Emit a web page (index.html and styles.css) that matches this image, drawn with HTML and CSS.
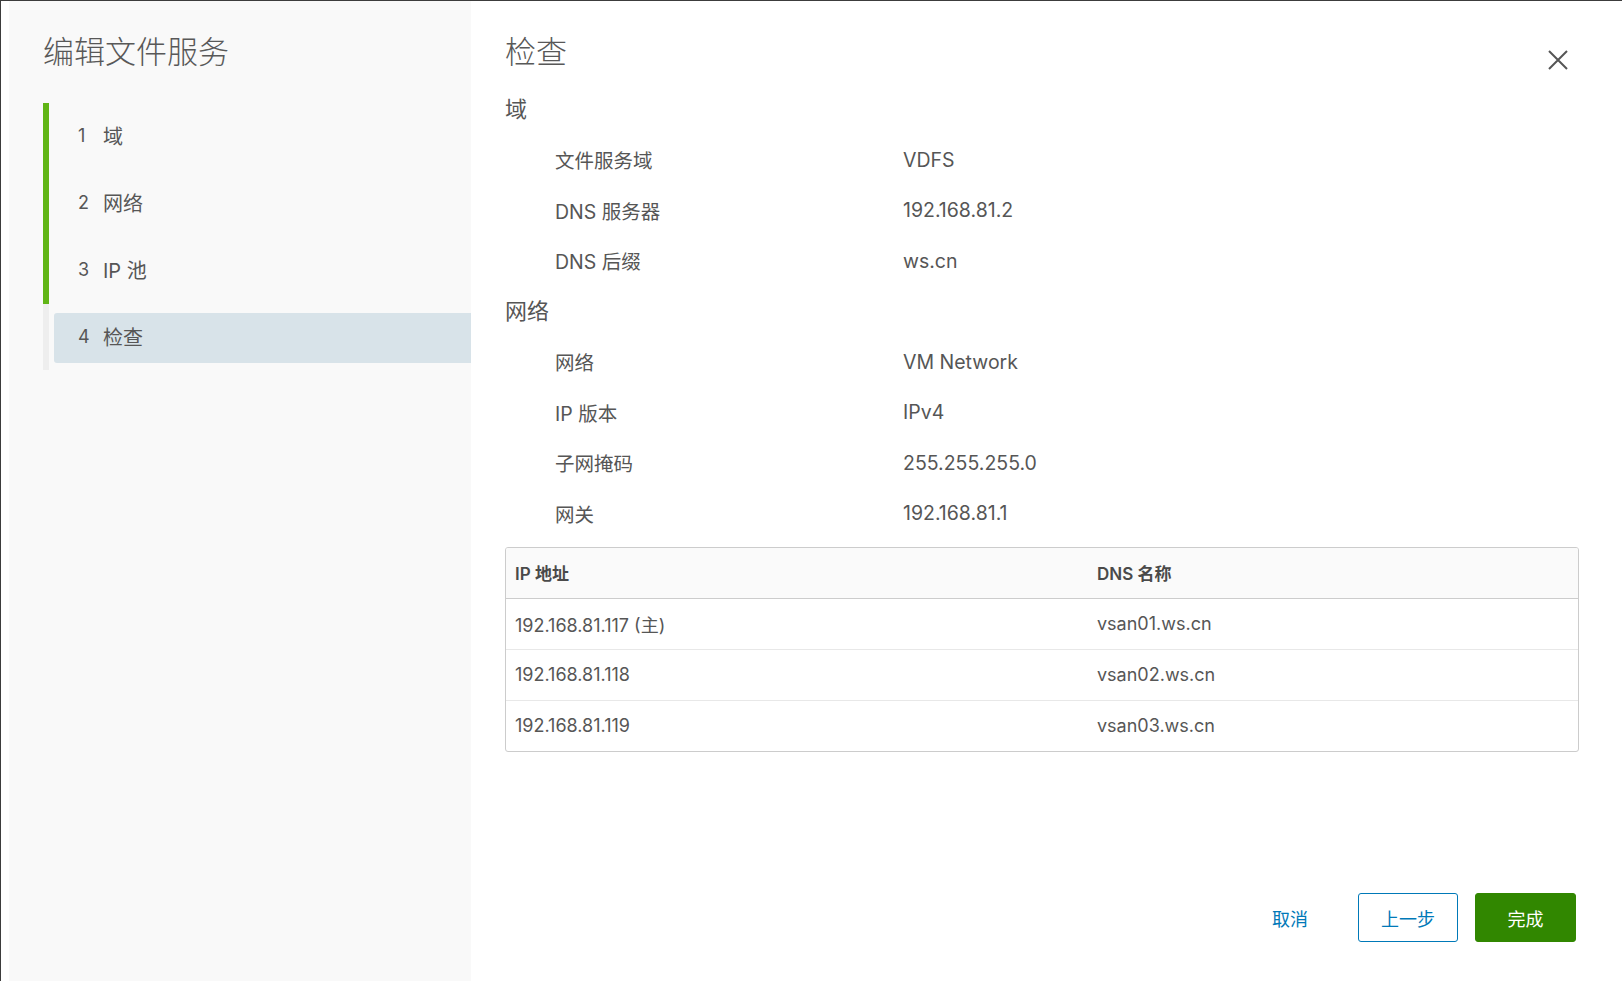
FILE: index.html
```html
<!DOCTYPE html>
<html lang="zh-CN">
<head>
<meta charset="utf-8">
<title>编辑文件服务</title>
<link rel="stylesheet" href="styles.css">
</head>
<body>
<div class="frame">
  <aside class="sidebar">
    <h1 class="wizard-title">编辑文件服务</h1>
    <ol class="stepnav">
      <li class="step done"><div class="step-box"><span class="step-num">1</span><span class="step-label">域</span></div></li>
      <li class="step done"><div class="step-box"><span class="step-num">2</span><span class="step-label">网络</span></div></li>
      <li class="step done"><div class="step-box"><span class="step-num">3</span><span class="step-label">IP 池</span></div></li>
      <li class="step current"><div class="step-box"><span class="step-num">4</span><span class="step-label">检查</span></div></li>
    </ol>
  </aside>
  <main class="content">
    <header class="content-header">
      <h2 class="page-title">检查</h2>
      <button class="close-btn" aria-label="关闭">
        <svg width="20" height="20" viewBox="0 0 20 20"><path d="M1 1 L19 19 M19 1 L1 19" stroke="#555" stroke-width="2" fill="none"/></svg>
      </button>
    </header>
    <section class="review">
      <div class="section-title">域</div>
      <div class="kv"><span class="k">文件服务域</span><span class="v">VDFS</span></div>
      <div class="kv"><span class="k">DNS 服务器</span><span class="v">192.168.81.2</span></div>
      <div class="kv"><span class="k">DNS 后缀</span><span class="v">ws.cn</span></div>
      <div class="section-title">网络</div>
      <div class="kv"><span class="k">网络</span><span class="v">VM Network</span></div>
      <div class="kv"><span class="k">IP 版本</span><span class="v">IPv4</span></div>
      <div class="kv"><span class="k">子网掩码</span><span class="v">255.255.255.0</span></div>
      <div class="kv"><span class="k">网关</span><span class="v">192.168.81.1</span></div>
      <div class="grid">
        <div class="grid-row grid-head"><div class="cell c1">IP 地址</div><div class="cell c2">DNS 名称</div></div>
        <div class="grid-row"><div class="cell c1">192.168.81.117 (主)</div><div class="cell c2">vsan01.ws.cn</div></div>
        <div class="grid-row"><div class="cell c1">192.168.81.118</div><div class="cell c2">vsan02.ws.cn</div></div>
        <div class="grid-row last"><div class="cell c1">192.168.81.119</div><div class="cell c2">vsan03.ws.cn</div></div>
      </div>
    </section>
    <footer class="actions">
      <button class="btn btn-link">取消</button>
      <button class="btn btn-outline">上一步</button>
      <button class="btn btn-success">完成</button>
    </footer>
  </main>
</div>
</body>
</html>
```
FILE: styles.css
```css
* { box-sizing: border-box; }
html, body { margin: 0; padding: 0; background: #fff; }
body {
  font-family: "Inter", "Noto Sans CJK SC", sans-serif;
  color: #565656;
  width: 1622px;
  height: 981px;
  overflow: hidden;
}
.frame {
  display: flex;
  height: 981px;
  border-top: 1px solid #3c3c3c;
  border-left: 1px solid #3c3c3c;
  background: #fff;
}
.sidebar {
  width: 462px;
  margin-left: 8px;
  background: #f9f9f9;
  padding: 25px 0 0 34px;
  flex: none;
}
.wizard-title {
  margin: 0;
  font-size: 31px;
  line-height: 52px;
  font-weight: 300;
  color: #585858;
}
.stepnav {
  list-style: none;
  margin: 25px 0 0 0;
  padding: 0;
}
.step {
  height: 67px;
  border-left: 6px solid #eeeeee;
  padding: 9px 0 7px 5px;
  display: flex;
}
.step.done { border-left-color: #60b515; }
.step:last-child { height: 66px; }
.step-box {
  flex: 1;
  display: flex;
  align-items: center;
  padding: 0 0 4px 24px;
  border-radius: 3px 0 0 3px;
  font-size: 20px;
  color: #565656;
}
.step.current .step-box { background: #d8e3e9; }
.step-num { width: 25px; font-size: 18px; }
.step-label { white-space: nowrap; }

.content {
  flex: 1;
  display: flex;
  flex-direction: column;
  padding: 25px 43px 39px 34px;
}
.content-header {
  display: flex;
  justify-content: space-between;
  align-items: flex-start;
  padding-right: 11px;
}
.page-title {
  margin: 0;
  font-size: 31px;
  line-height: 52px;
  font-weight: 300;
  color: #585858;
}
.close-btn {
  margin-top: 24px;
  width: 20px;
  height: 20px;
  padding: 0;
  border: 0;
  background: none;
  display: block;
}
.close-btn svg { display: block; }
.review {
  margin: 6px 0 0 0;
}
.section-title {
  height: 50.5px;
  line-height: 50.5px;
  font-size: 22px;
  color: #565656;
}
.kv {
  height: 50.5px;
  display: flex;
  align-items: center;
  padding-left: 50px;
  font-size: 19.5px;
}
.kv .k { width: 348px; flex: none; }
.kv .v { flex: 1; }

.grid {
  margin-top: 8px;
  border: 1px solid #cccccc;
  border-radius: 3px;
  overflow: hidden;
}
.grid-row {
  display: flex;
  height: 51px;
  border-bottom: 1px solid #e8e8e8;
  font-size: 18px;
  align-items: center;
}
.grid-row.last { border-bottom: 0; height: 50px; }
.grid-head {
  background: #fafafa;
  border-bottom: 1px solid #cccccc;
  font-size: 17px;
  font-weight: 600;
  color: #4a4a4a;
  height: 51px;
}
.cell { padding-left: 9px; }
.c1 { width: 582px; flex: none; }
.c2 { flex: 1; }

.actions {
  margin-top: auto;
  display: flex;
  justify-content: flex-end;
  align-items: center;
  gap: 17px;
  padding-right: 3px;
}
.btn {
  font-family: "Inter", "Noto Sans CJK SC", sans-serif;
  height: 49px;
  width: 100px;
  font-size: 18px;
  border-radius: 3px;
  border: 1.5px solid transparent;
  background: none;
  padding: 0;
  cursor: pointer;
}
.btn-link { color: #0079b8; margin-right: 1px; }
.btn-outline { border-color: #0079b8; color: #0079b8; background: #fff; }
.btn-success { background: #318700; border-color: #318700; color: #fff; width: 101px; }
```
